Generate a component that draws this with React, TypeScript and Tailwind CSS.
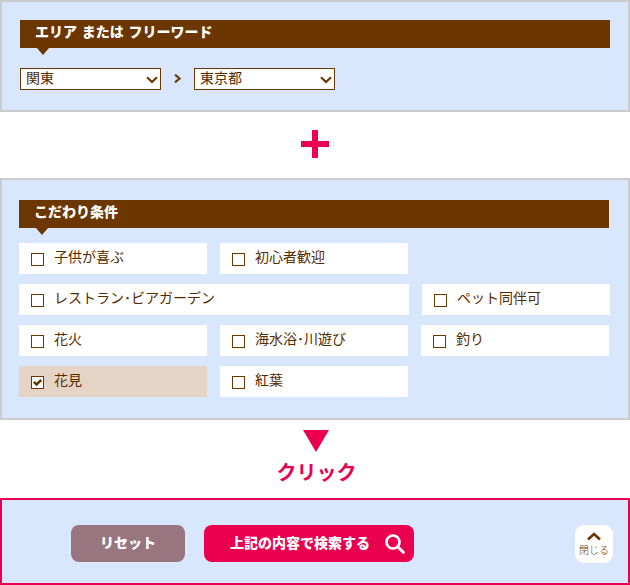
import { type ReactNode } from 'react'
import clsx from 'clsx'

interface Condition {
  label: string
  checked?: boolean
  wide?: boolean
}

const conditionRows: Condition[][] = [
  [{ label: '子供が喜ぶ' }, { label: '初心者歓迎' }],
  [{ label: 'レストラン･ビアガーデン', wide: true }, { label: 'ペット同伴可' }],
  [{ label: '花火' }, { label: '海水浴･川遊び' }, { label: '釣り' }],
  [{ label: '花見', checked: true }, { label: '紅葉' }],
]

function SectionTitle({ children }: { children: ReactNode }) {
  return (
    <h2 className="relative h-7 w-[590px] bg-[#6b3600] pl-[15px] text-sm leading-[23px] font-black text-white [word-spacing:1.5px]">
      {children}
      <svg className="absolute top-[28px] left-[17px] h-[7px] w-3" viewBox="0 0 12 7">
        <path d="M0 0h12L6 7z" fill="#6b3600" />
      </svg>
    </h2>
  )
}

function SelectBox({ value }: { value: string }) {
  return (
    <button className="flex h-[22px] w-[141px] items-center justify-between border border-[#6b3600] bg-white pr-[2px] pl-[5px] text-sm leading-5">
      <span className="-mt-[5px]">{value}</span>
      <svg className="mt-[2px] h-2 w-3" viewBox="0 0 12 8" fill="none">
        <path d="M1 1.3l5 4.7 5-4.7" stroke="#6b3600" strokeWidth="2.2" />
      </svg>
    </button>
  )
}

function ConditionItem({ label, checked, wide }: Condition) {
  return (
    <label
      className={clsx(
        'flex h-[31px] items-center pl-3 text-sm',
        wide ? 'w-[390px]' : 'w-[188px]',
        checked ? 'bg-[#e5d4c5]' : 'bg-white'
      )}
    >
      <span className="mt-px flex h-[13px] w-[13px] items-center justify-center border border-[#6b3600] bg-white">
        {checked && (
          <svg className="h-[9px] w-[9px]" viewBox="0 0 9 9" fill="none">
            <path d="M.8 3.8l2.8 2.7L8.2 2" stroke="#6b3600" strokeWidth="2.5" />
          </svg>
        )}
      </span>
      <span className="-mt-[5px] ml-[10px]">{label}</span>
    </label>
  )
}

export default function App() {
  return (
    <main className="h-[585px] w-[630px] bg-white font-['Noto_Sans_CJK_JP',sans-serif] text-[#552b00]">
      <section className="h-28 border-2 border-[#cccccc] bg-[#d8e7fd] pt-[18px] pl-[18px]">
        <SectionTitle>エリア または フリーワード</SectionTitle>
        <div className="mt-5 flex items-center">
          <SelectBox value="関東" />
          <svg className="mr-3 mb-px ml-[13px] h-[9px] w-2" viewBox="0 0 8 9" fill="none">
            <path d="M1 .6l4.6 3.9L1 8.4" stroke="#6b3600" strokeWidth="2.1" />
          </svg>
          <SelectBox value="東京都" />
        </div>
      </section>

      <div className="flex h-[66px] justify-center pt-[18px]">
        <svg className="h-7 w-7" viewBox="0 0 28 28">
          <path d="M11 0h6v11h11v6H17v11h-6V17H0v-6h11z" fill="#eb0050" />
        </svg>
      </div>

      <section className="h-[242px] border-2 border-[#cccccc] bg-[#d8e7fd] pt-5 pl-[17px]">
        <SectionTitle>こだわり条件</SectionTitle>
        <div className="mt-[15px] flex flex-col gap-[10px]">
          {conditionRows.map((row) => (
            <div key={row[0].label} className="flex gap-[13px]">
              {row.map((item) => (
                <ConditionItem key={item.label} {...item} />
              ))}
            </div>
          ))}
        </div>
      </section>

      <div className="flex h-[78px] flex-col items-center pt-[10px] pl-[2px]">
        <svg className="h-[22px] w-[26px]" viewBox="0 0 26 22">
          <path d="M0 0h26L13 22z" fill="#eb0050" />
        </svg>
        <p className="mt-[5px] ml-px text-[20px] leading-[30px] font-bold text-[#eb0050]">クリック</p>
      </div>

      <section className="flex h-[87px] items-start border-2 border-[#eb0050] bg-[#d8e7fd] pt-[25px] pl-[69px] text-white">
        <button className="h-[37px] w-[114px] rounded-lg bg-[#997580] pb-[3px] text-sm font-black">リセット</button>
        <button className="ml-[19px] flex h-[37px] w-[210px] items-center justify-between rounded-lg bg-[#eb0050] pr-[9px] pl-[26px] text-sm font-black">
          <span className="-mt-[3px]">上記の内容で検索する</span>
          <svg className="h-5 w-5" viewBox="0 0 20 20" fill="none" stroke="white">
            <circle cx="8" cy="8" r="6.5" strokeWidth="2.7" />
            <path d="M13 13l5.3 5.3" strokeWidth="3" strokeLinecap="round" />
          </svg>
        </button>
        <button className="ml-[161px] flex h-[38px] w-[38px] flex-col items-center rounded-[9px] bg-white pt-[7px]">
          <svg className="h-[9px] w-[14px]" viewBox="0 0 14 9" fill="none">
            <path d="M1 7.5l6-5.4 6 5.4" stroke="#6b3600" strokeWidth="2.6" />
          </svg>
          <span className="mt-px text-[10px] leading-4 font-light text-[#6b3600]">閉じる</span>
        </button>
      </section>
    </main>
  )
}
